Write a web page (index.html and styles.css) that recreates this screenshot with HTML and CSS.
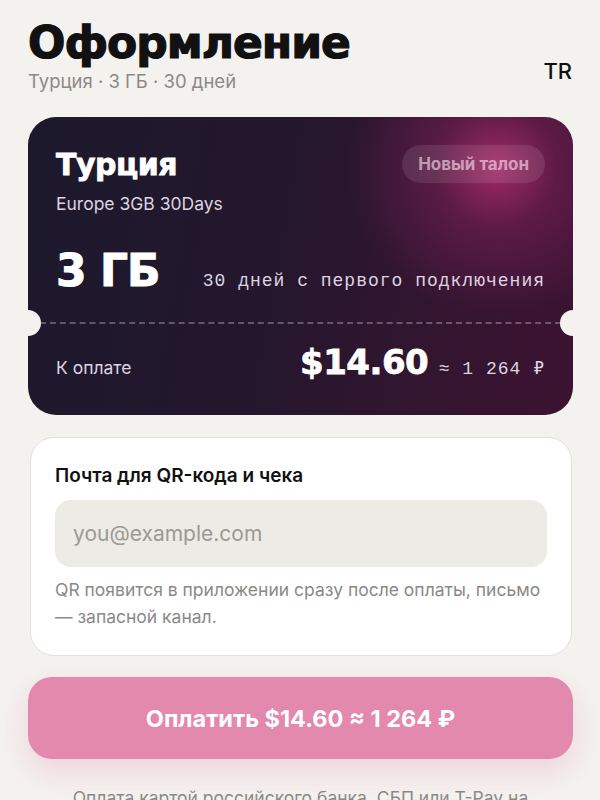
FILE: index.html
```html
<!DOCTYPE html>
<html lang="ru">
<head>
    <meta charset="UTF-8">
    <meta name="viewport" content="width=device-width, initial-scale=1.0">
    <title>Оформление</title>
    <link rel="stylesheet" href="styles.css">
</head>
<body>

    <div class="page">
        <div class="header">
            <div>
                <h1>Оформление</h1>
                <div class="subtitle">Турция · 3 ГБ · 30 дней</div>
            </div>
            <div class="country-code">TR</div>
        </div>

        <div class="ticket">
            <div class="ticket-top">
                <div class="ticket-row">
                    <div class="ticket-country">Турция</div>
                    <div class="badge">Новый талон</div>
                </div>
                <div class="ticket-plan">Europe 3GB 30Days</div>
                <div class="ticket-data">
                    <div class="data-amount">3 ГБ</div>
                    <div class="data-term">30 дней с первого подключения</div>
                </div>
            </div>
            <div class="ticket-divider"></div>
            <div class="ticket-bottom">
                <div class="pay-label">К оплате</div>
                <div class="pay-sum">
                    <span class="price">$14.60</span>
                    <span class="price-rub">≈ 1 264 ₽</span>
                </div>
            </div>
        </div>

        <div class="email-card">
            <label class="email-label" for="email">Почта для QR-кода и чека</label>
            <input class="email-input" id="email" type="email" placeholder="you@example.com">
            <p class="email-hint">QR появится в приложении сразу после оплаты, письмо — запасной канал.</p>
        </div>

        <button class="pay-btn">Оплатить $14.60 ≈ 1 264 ₽</button>

        <p class="footnote">Оплата картой российского банка, СБП или T-Pay на защищённой странице банка.</p>
    </div>

</body>
</html>
```

FILE: styles.css
```css
body {
    font-family: Inter, "Noto Sans", sans-serif;
    background-color: #f4f2ef;
    color: #111;
    margin: 0;
    padding: 0;
}
.page {
    padding: 20px 27px 0 28px;
    display: flex;
    flex-direction: column;
}
.header {
    display: flex;
    justify-content: space-between;
    align-items: flex-end;
}
h1 {
    font-family: "DejaVu Sans", sans-serif;
    font-weight: bold;
    font-size: 44px;
    line-height: 46px;
    letter-spacing: -1px;
    margin: 0;
    color: #111;
    -webkit-text-stroke: 1.2px #111;
}
.subtitle {
    font-size: 18.5px;
    color: #8b8986;
    margin-top: 4px;
}
.country-code {
    font-size: 22px;
    font-weight: 500;
    color: #111;
    margin-bottom: 8px;
    margin-right: 1px;
}
.ticket {
    margin-top: 25px;
    border-radius: 28px;
    color: #fff;
    background:
        radial-gradient(circle at 86% 17%, rgba(180, 46, 112, 0.85) 0, rgba(140, 34, 96, 0.45) 60px, rgba(80, 20, 60, 0) 150px),
        linear-gradient(100deg, #1c192c 0%, #24172d 45%, #331530 75%, #3c1332 100%);
    overflow: hidden;
}
.ticket-top {
    padding: 28px 28px 26px;
}
.ticket-row {
    display: flex;
    justify-content: space-between;
    align-items: center;
}
.ticket-country {
    font-family: "DejaVu Sans", sans-serif;
    font-weight: bold;
    font-size: 30px;
    letter-spacing: -0.5px;
    -webkit-text-stroke: 0.8px #fff;
}
.badge {
    background: rgba(255, 255, 255, 0.1);
    color: rgba(255, 228, 240, 0.62);
    font-weight: bold;
    font-size: 17px;
    padding: 9px 16px;
    border-radius: 20px;
}
.ticket-plan {
    margin-top: 10px;
    font-size: 17.5px;
    color: #ddd4e0;
}
.ticket-data {
    margin-top: 31px;
    display: flex;
    justify-content: space-between;
    align-items: baseline;
}
.data-amount {
    font-family: "DejaVu Sans", sans-serif;
    font-weight: bold;
    font-size: 44px;
    letter-spacing: -1px;
    -webkit-text-stroke: 1px #fff;
}
.data-term {
    font-family: "Liberation Mono", monospace;
    font-size: 18px;
    letter-spacing: 1px;
    color: #ddd4e0;
}
.ticket-divider {
    position: relative;
    border-top: 2px dashed rgba(255, 255, 255, 0.28);
    margin: 0 12px;
}
.ticket-divider::before,
.ticket-divider::after {
    content: "";
    position: absolute;
    top: -14px;
    width: 26px;
    height: 26px;
    border-radius: 50%;
    background: #f4f2ef;
}
.ticket-divider::before {
    left: -25px;
}
.ticket-divider::after {
    right: -25px;
}
.ticket-bottom {
    padding: 18px 28px 33px;
    display: flex;
    justify-content: space-between;
    align-items: baseline;
}
.pay-label {
    font-size: 17.5px;
    color: #ddd4e0;
}
.price {
    font-family: "DejaVu Sans", sans-serif;
    font-weight: bold;
    font-size: 34px;
    letter-spacing: -0.5px;
    color: #fff;
    -webkit-text-stroke: 0.8px #fff;
}
.price-rub {
    font-family: "Liberation Mono", monospace;
    font-size: 18px;
    letter-spacing: 1px;
    color: #ddd4e0;
    margin-left: 6px;
}
.email-card {
    margin: 22px 1px 0 2px;
    background: #fff;
    border: 1px solid #e3e1dd;
    border-radius: 24px;
    padding: 26px 24px 25px;
    display: flex;
    flex-direction: column;
}
.email-label {
    font-size: 19px;
    font-weight: 600;
    color: #111;
}
.email-input {
    margin-top: 13px;
    height: 67px;
    box-sizing: border-box;
    border: none;
    border-radius: 16px;
    background: #ecebe5;
    padding: 0 18px;
    font-family: Inter, sans-serif;
    font-size: 21px;
    color: #111;
    outline: none;
}
.email-input::placeholder {
    color: #9b9a96;
}
.email-hint {
    margin: 9px 0 0;
    font-size: 17.5px;
    line-height: 27px;
    color: #8b8986;
}
.pay-btn {
    margin-top: 21px;
    height: 82px;
    border: none;
    border-radius: 24px;
    background: #e389ae;
    color: #fff;
    font-family: Inter, sans-serif;
    font-weight: bold;
    font-size: 23.5px;
    cursor: pointer;
    box-shadow: 0 12px 30px rgba(227, 137, 174, 0.3);
}
.footnote {
    margin: 26px 16px 0;
    text-align: center;
    font-size: 17.5px;
    line-height: 26px;
    color: #8b8986;
}
```
